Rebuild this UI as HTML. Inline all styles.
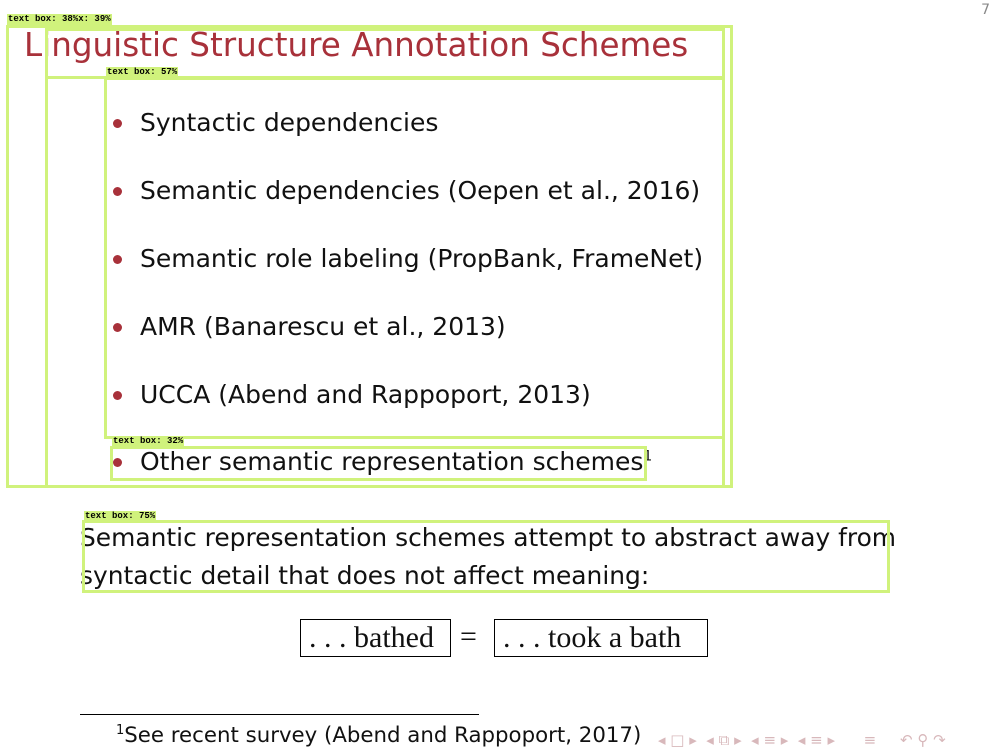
<!DOCTYPE html>
<html><head><meta charset="utf-8"><style>
body{margin:0;width:1008px;height:756px;background:#fff;position:relative;overflow:hidden;font-family:"DejaVu Sans","Liberation Sans",sans-serif;color:#111}
.a{position:absolute;white-space:nowrap}
.gb{position:absolute;border:3px solid #d0f27c;box-sizing:border-box}
.lbl{position:absolute;background:#d0f27c;font:bold 9px "Liberation Mono",monospace;color:#000;padding:0 1px;line-height:11px}
.t{color:#a8313a;font-size:32.6px}
.b{font-size:25px;left:140px}
.dot{position:absolute;left:113px;width:9px;height:9px;border-radius:50%;background:#a8313a}
.p{font-size:24.9px;left:80px}
.bx{position:absolute;border:1px solid #000;font-family:"Liberation Serif",serif;font-size:30px;line-height:36px;padding:0 8px;box-sizing:border-box;height:38px}
.nav{position:absolute;top:731px;color:#d8b8bb;font-size:15px}
</style></head><body>
<div class="a" style="right:18px;top:2px;font-size:14px;color:#888">7</div>
<div class="a t" style="left:24px;top:26px">Linguistic Structure Annotation Schemes</div>
<div class="dot" style="top:119px"></div><div class="a b" style="top:108px">Syntactic dependencies</div>
<div class="dot" style="top:187px"></div><div class="a b" style="top:176px">Semantic dependencies (Oepen et al., 2016)</div>
<div class="dot" style="top:255px"></div><div class="a b" style="top:244px">Semantic role labeling (PropBank, FrameNet)</div>
<div class="dot" style="top:323px"></div><div class="a b" style="top:312px">AMR (Banarescu et al., 2013)</div>
<div class="dot" style="top:391px"></div><div class="a b" style="top:380px">UCCA (Abend and Rappoport, 2013)</div>
<div class="dot" style="top:458px"></div><div class="a b" style="top:447px">Other semantic representation schemes<sup style="font-size:14px">1</sup></div>
<div class="a p" style="top:523px">Semantic representation schemes attempt to abstract away from</div>
<div class="a p" style="top:561px">syntactic detail that does not affect meaning:</div>
<div class="bx" style="left:300px;top:619px;width:151px">. . . bathed</div>
<div class="a" style="left:460px;top:619px;font-family:'Liberation Serif',serif;font-size:30px;line-height:36px">=</div>
<div class="bx" style="left:494px;top:619px;width:214px">. . . took a bath</div>
<div class="a" style="left:80px;top:714px;width:399px;border-top:1px solid #000"></div>
<div class="a" style="left:116px;top:723px;font-size:21.3px"><sup style="font-size:13px">1</sup>See recent survey (Abend and Rappoport, 2017)</div>
<div class="nav" style="left:658px">◂ □ ▸ &nbsp;◂ ⧉ ▸ &nbsp;◂ ≡ ▸ &nbsp;◂ ≡ ▸ &nbsp;&nbsp;&nbsp;&nbsp; ≡ &nbsp;&nbsp;&nbsp; ↶ ⚲ ↷</div>
<div class="gb" style="left:6px;top:25px;width:727px;height:463px"></div>
<div class="gb" style="left:45px;top:28px;width:680px;height:460px"></div>
<div class="gb" style="left:45px;top:27px;width:680px;height:52px"></div>
<div class="gb" style="left:104px;top:77px;width:621px;height:362px"></div>
<div class="gb" style="left:110px;top:446px;width:537px;height:35px"></div>
<div class="gb" style="left:82px;top:520px;width:808px;height:73px"></div>
<div class="lbl" style="left:7px;top:14px">text box: 38%x: 39%</div>
<div class="lbl" style="left:106px;top:67px">text box: 57%</div>
<div class="lbl" style="left:112px;top:436px">text box: 32%</div>
<div class="lbl" style="left:84px;top:511px">text box: 75%</div>
</body></html>
